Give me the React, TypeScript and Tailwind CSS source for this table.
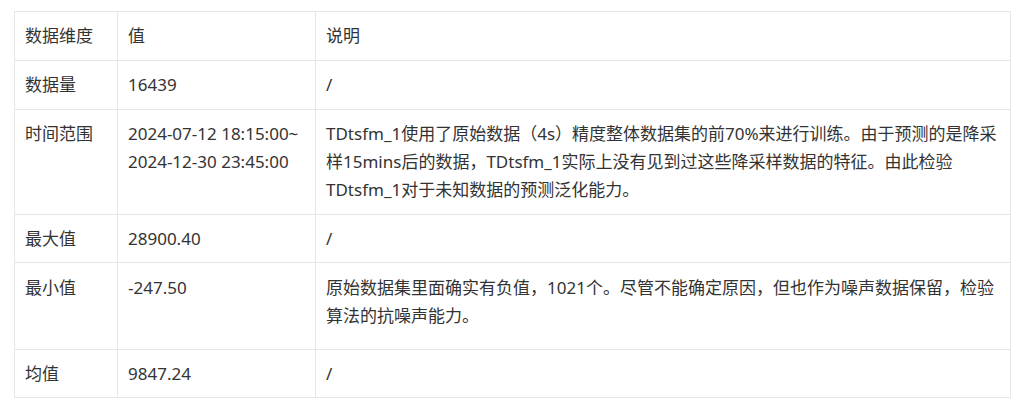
import React from 'react';

type Row = {
  dim: string;
  value: React.ReactNode;
  desc: React.ReactNode;
  pad: string;
};

const rows: Row[] = [
  { dim: '数据量', value: '16439', desc: '/', pad: 'py-[10px]' },
  {
    dim: '时间范围',
    value: (
      <>
        2024-07-12 18:15:00~
        <br />
        2024-12-30 23:45:00
      </>
    ),
    desc: (
      <>
        TDtsfm_1使用了原始数据（4s）精度整体数据集的前70%来进行训练。由于预测的是降采
        <br />
        样15mins后的数据，TDtsfm_1实际上没有见到过这些降采样数据的特征。由此检验
        <br />
        TDtsfm_1对于未知数据的预测泛化能力。
      </>
    ),
    pad: 'py-[10px]',
  },
  { dim: '最大值', value: '28900.40', desc: '/', pad: 'pt-[10px] pb-[9px]' },
  {
    dim: '最小值',
    value: '-247.50',
    desc: (
      <>
        原始数据集里面确实有负值，1021个。尽管不能确定原因，但也作为噪声数据保留，检验
        <br />
        算法的抗噪声能力。
      </>
    ),
    pad: 'pt-[11px] pb-[19px]',
  },
  { dim: '均值', value: '9847.24', desc: '/', pad: 'pt-[10px] pb-[9px]' },
];

export default function App() {
  const cell = 'border border-[#e6e6e6] px-[10px] align-top whitespace-nowrap';
  return (
    <div
      className="w-[1024px] h-[408px] bg-white pt-[11px] pl-[14px] text-[17px] leading-[28px] text-[#333333]"
      style={{ fontFamily: '"Noto Sans", "Noto Sans CJK SC", sans-serif' }}
    >
      <table className="border-collapse table-fixed w-[997px]">
        <colgroup>
          <col className="w-[103px]" />
          <col className="w-[198px]" />
          <col />
        </colgroup>
        <tbody>
          <tr>
            <td className={`${cell} py-[10px]`}>数据维度</td>
            <td className={`${cell} py-[10px]`}>值</td>
            <td className={`${cell} py-[10px]`}>说明</td>
          </tr>
          {rows.map((r) => (
            <tr key={r.dim}>
              <td className={`${cell} ${r.pad}`}>{r.dim}</td>
              <td className={`${cell} ${r.pad}`}>{r.value}</td>
              <td className={`${cell} ${r.pad}`}>{r.desc}</td>
            </tr>
          ))}
        </tbody>
      </table>
    </div>
  );
}
